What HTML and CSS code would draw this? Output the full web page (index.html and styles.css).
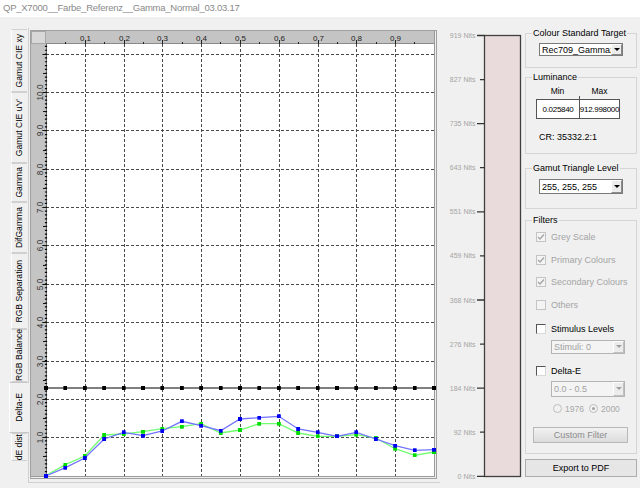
FILE: index.html
```html
<!DOCTYPE html>
<html>
<head>
<meta charset="utf-8">
<link rel="stylesheet" href="styles.css">
</head>
<body>
<div class="titlebar">QP_X7000__Farbe_Referenz__Gamma_Normal_03.03.17</div>
<div class="main">
  <div class="tabctl">
    <div class="tabs">
      <div class="tab t1"><span>Gamut CIE xy</span></div>
      <div class="tab t2"><span>Gamut CIE u'v'</span></div>
      <div class="tab t3"><span>Gamma</span></div>
      <div class="tab t4"><span>DifGamma</span></div>
      <div class="tab t5"><span>RGB Separation</span></div>
      <div class="tab t6"><span>RGB Balance</span></div>
      <div class="tab t7 sel"><span>Delta-E</span></div>
      <div class="tab t8"><span>dE dist</span></div>
    </div>
    <div class="page">
      <svg class="chart" viewBox="30 28 408 452" xmlns="http://www.w3.org/2000/svg">
        <defs>
          <marker id="mk" markerWidth="4" markerHeight="4" refX="2" refY="2" markerUnits="userSpaceOnUse"><rect width="4" height="4" fill="#000"/></marker>
          <marker id="mb" markerWidth="4" markerHeight="4" refX="2" refY="2" markerUnits="userSpaceOnUse"><rect width="4" height="4" fill="#0000f0"/></marker>
          <marker id="mg" markerWidth="4" markerHeight="4" refX="2" refY="2" markerUnits="userSpaceOnUse"><rect width="4" height="4" fill="#00dc00"/></marker>
        </defs>
        <rect x="30.5" y="30.5" width="406" height="448" fill="#f0f0f0" stroke="#a0a0a0"/>
        <rect x="31" y="31" width="404" height="13" fill="#c4c4c4"/>
        <rect x="31" y="31" width="15" height="446" fill="#c4c4c4"/>
        <rect x="31.5" y="31.5" width="14" height="12" fill="#d8d8d8" stroke="#a8a8a8"/>
        <rect x="46" y="44" width="388" height="432" fill="#fff"/>
        <line x1="434.5" y1="31" x2="434.5" y2="477" stroke="#9a9a9a"/>
        <line x1="31" y1="476.5" x2="435" y2="476.5" stroke="#9a9a9a"/>
        <line x1="46" y1="43.5" x2="434" y2="43.5" stroke="#8a8a8a"/>

        <g stroke="#4a4a4a" stroke-width="1" stroke-dasharray="3 2">
          <path d="M85.5 44V476M124.5 44V476M162.5 44V476M201.5 44V476M240.5 44V476M279.5 44V476M318.5 44V476M356.5 44V476M395.5 44V476"/>
          <path d="M46 437.5H434M46 399.5H434M46 361.5H434M46 322.5H434M46 284.5H434M46 245.5H434M46 207.5H434M46 169.5H434M46 130.5H434M46 92.5H434M46 54.5H434"/>
        </g>

        <g stroke="#222" stroke-width="1">
          <path d="M65.5 42V44M85.5 40V44M104.5 42V44M124.5 40V44M143.5 42V44M162.5 40V44M182.5 42V44M201.5 40V44M220.5 42V44M240.5 40V44M259.5 42V44M279.5 40V44M298.5 42V44M318.5 40V44M337.5 42V44M356.5 40V44M376.5 42V44M395.5 40V44M414.5 42V44"/>
        </g>
        <g font-family="Liberation Sans, Arial, sans-serif" font-size="8" fill="#222" text-anchor="middle">
          <text x="85.5" y="41">0.1</text>
          <text x="124.5" y="41">0.2</text>
          <text x="162.5" y="41">0.3</text>
          <text x="201.5" y="41">0.4</text>
          <text x="240.5" y="41">0.5</text>
          <text x="279.5" y="41">0.6</text>
          <text x="318.5" y="41">0.7</text>
          <text x="356.5" y="41">0.8</text>
          <text x="395.5" y="41">0.9</text>
        </g>

        <path d="M46 476V44" stroke="#000" stroke-width="2.2" stroke-dasharray="1.2 2.63"/>
        <path d="M46.5 476V44" stroke="#000" stroke-width="0.6"/>
        <g stroke="#111" stroke-width="1">
          <path d="M42.5 437.5H47M42.5 399.5H47M42.5 361.5H47M42.5 322.5H47M42.5 284.5H47M42.5 245.5H47M42.5 207.5H47M42.5 169.5H47M42.5 130.5H47M42.5 92.5H47M42.5 54.5H47"/>
          <path d="M43 456.5H46M43 418.5H46M43 380.5H46M43 341.5H46M43 303.5H46M43 265.5H46M43 226.5H46M43 188.5H46M43 150.5H46M43 111.5H46M43 73.5H46"/>
        </g>
        <g font-family="Liberation Sans, Arial, sans-serif" font-size="8.3" fill="#333" text-anchor="middle">
          <text transform="translate(42.5 437.5) rotate(-90)">1.0</text>
          <text transform="translate(42.5 399.5) rotate(-90)">2.0</text>
          <text transform="translate(42.5 361.5) rotate(-90)">3.0</text>
          <text transform="translate(42.5 322.5) rotate(-90)">4.0</text>
          <text transform="translate(42.5 284.5) rotate(-90)">5.0</text>
          <text transform="translate(42.5 245.5) rotate(-90)">6.0</text>
          <text transform="translate(42.5 207.5) rotate(-90)">7.0</text>
          <text transform="translate(42.5 169.5) rotate(-90)">8.0</text>
          <text transform="translate(42.5 130.5) rotate(-90)">9.0</text>
          <text transform="translate(42.5 92.5) rotate(-90)">10.0</text>
        </g>

        <polyline fill="none" stroke="#000" stroke-width="1.2" marker-start="url(#mk)" marker-mid="url(#mk)" marker-end="url(#mk)"
          points="46,388 65.4,388 84.8,388 104.2,388 123.6,388 143,388 162.4,388 181.8,388 201.2,388 220.6,388 240,388 259.4,388 278.8,388 298.2,388 317.6,388 337,388 356.4,388 375.8,388 395.2,388 414.6,388 434,388"/>
        <polyline fill="none" stroke="#70ff70" stroke-width="1.3" marker-start="url(#mg)" marker-mid="url(#mg)" marker-end="url(#mg)"
          points="46,475.5 65.4,464.7 84.8,456 104.2,435 123.6,434 143,431.7 162.4,428.7 181.8,426.7 201.2,423.7 220.6,433 240,430 259.4,423.7 278.8,423.7 298.2,433 317.6,436.3 337,436.3 356.4,434.7 375.8,438 395.2,448.7 414.6,455.3 434,452"/>
        <polyline fill="none" stroke="#7272ff" stroke-width="1.3" marker-start="url(#mb)" marker-mid="url(#mb)" marker-end="url(#mb)"
          points="46,476 65.4,467.7 84.8,458 104.2,439 123.6,432.3 143,435.7 162.4,431 181.8,421.3 201.2,425.7 220.6,430.7 240,419 259.4,417.7 278.8,416.3 298.2,429 317.6,432.3 337,436.3 356.4,432.3 375.8,439 395.2,445.7 414.6,450.3 434,449.7"/>
      </svg>
    </div>
  </div>

  <svg class="scale" viewBox="440 28 84 452" xmlns="http://www.w3.org/2000/svg">
    <rect x="484.5" y="35.5" width="36" height="441" fill="#e9dbdb" stroke="#404040" stroke-width="1.3"/>
    <g stroke="#333" stroke-width="1.3">
      <path d="M477 35.5H484.5M480 79.6H484.5M477 123.7H484.5M480 167.7H484.5M477 211.8H484.5M480 255.9H484.5M477 300H484.5M480 344.1H484.5M477 388.1H484.5M480 432.2H484.5M477 476.3H484.5"/>
    </g>
    <g font-family="Liberation Sans, Arial, sans-serif" font-size="7" fill="#a4a4a4" text-anchor="end">
      <text x="475.5" y="38">919 Nits</text>
      <text x="475.5" y="82.1">827 Nits</text>
      <text x="475.5" y="126.2">735 Nits</text>
      <text x="475.5" y="170.2">643 Nits</text>
      <text x="475.5" y="214.3">551 Nits</text>
      <text x="475.5" y="258.4">459 Nits</text>
      <text x="475.5" y="302.5">368 Nits</text>
      <text x="475.5" y="346.6">276 Nits</text>
      <text x="475.5" y="390.6">184 Nits</text>
      <text x="475.5" y="434.7">92 Nits</text>
      <text x="475.5" y="478.8">0 Nits</text>
    </g>
  </svg>

  <div class="panel">
    <div class="group g-target">
      <span class="group-title">Colour Standard Target</span>
      <div class="combo w84">
        <span class="combo-text">Rec709_Gamma2</span>
        <span class="combo-btn"><i class="arrow"></i></span>
      </div>
    </div>

    <div class="group g-lum">
      <span class="group-title">Luminance</span>
      <div class="lum-table">
        <div class="lum-head"><span>Min</span><span>Max</span></div>
        <div class="lum-gap"><span></span><span class="div"></span></div>
        <div class="lum-vals"><span>0.025840</span><span class="div">912.998000</span></div>
      </div>
      <div class="cr">CR: 35332.2:1</div>
    </div>

    <div class="group g-gamut">
      <span class="group-title">Gamut Triangle Level</span>
      <div class="combo w84 tall">
        <span class="combo-text">255, 255, 255</span>
        <span class="combo-btn"><i class="arrow"></i></span>
      </div>
    </div>

    <div class="group g-filters">
      <span class="group-title">Filters</span>
      <div class="chk dis r1"><span class="box"><svg viewBox="0 0 8 8"><polyline points="1,4 3,6 7,1.5" fill="none" stroke="#a6a6a6" stroke-width="1.4"/></svg></span><span>Grey Scale</span></div>
      <div class="chk dis r2"><span class="box"><svg viewBox="0 0 8 8"><polyline points="1,4 3,6 7,1.5" fill="none" stroke="#a6a6a6" stroke-width="1.4"/></svg></span><span>Primary Colours</span></div>
      <div class="chk dis r2"><span class="box"><svg viewBox="0 0 8 8"><polyline points="1,4 3,6 7,1.5" fill="none" stroke="#a6a6a6" stroke-width="1.4"/></svg></span><span>Secondary Colours</span></div>
      <div class="chk dis r2"><span class="box"></span><span>Others</span></div>
      <div class="chk r5"><span class="box on"></span><span>Stimulus Levels</span></div>
      <div class="combo dcombo c1">
        <span class="combo-text">Stimuli: 0</span>
        <span class="combo-btn"><i class="arrow"></i></span>
      </div>
      <div class="chk r6"><span class="box on"></span><span>Delta-E</span></div>
      <div class="combo dcombo c2">
        <span class="combo-text">0.0 - 0.5</span>
        <span class="combo-btn"><i class="arrow"></i></span>
      </div>
      <div class="radios">
        <span class="radio"></span><span class="rlabel">1976</span>
        <span class="radio sel"></span><span class="rlabel">2000</span>
      </div>
      <div class="btn custom">Custom Filter</div>
    </div>

    <div class="btn export">Export to PDF</div>
  </div>
</div>
</body>
</html>
```

FILE: styles.css
```css
* { box-sizing: border-box; }
html, body { margin: 0; padding: 0; }
body {
  width: 640px;
  height: 488px;
  overflow: hidden;
  background: #f0f0f0;
  font-family: "Liberation Sans", Arial, sans-serif;
  font-size: 9px;
  color: #000;
}

.titlebar {
  height: 17px;
  background: #fff;
  color: #8a8a8a;
  font-size: 9.5px;
  letter-spacing: -0.25px;
  line-height: 16px;
  padding-left: 3px;
  white-space: nowrap;
}

.main { display: flex; align-items: flex-start; }

/* tab control */
.tabctl { display: flex; margin-left: 9px; margin-top: 11px; }
.tabs { width: 19px; padding-top: 1px; display: flex; flex-direction: column; }
.tab {
  width: 16px;
  margin-left: 2px;
  border: 1px solid #d0d0d0;
  border-right: none;
  border-left-color: #fdfdfd;
  display: flex;
  align-items: center;
  justify-content: center;
  background: #f0f0f0;
}
.tab span {
  writing-mode: vertical-rl;
  transform: rotate(180deg);
  font-size: 8.6px;
  line-height: 1;
  white-space: nowrap;
  color: #000;
}
.t1 { height: 63px; }
.t2 { height: 71px; }
.t3 { height: 39px; }
.t4 { height: 51px; }
.t5 { height: 76px; }
.t6 { height: 53px; }
.t7 { height: 51px; }
.t8 { height: 28px; }
.tab.sel {
  width: 20px;
  margin-left: 0;
  margin-right: -1px;
  position: relative;
  z-index: 1;
  border-color: #c8c8c8;
  border-left-color: #fff;
}

.page {
  width: 412px;
  height: 455px;
  border-left: 1px solid #d0d0d0;
  border-bottom: 1px solid #d0d0d0;
  padding-left: 1px;
}
.chart { display: block; width: 408px; height: 452px; }

.scale { display: block; width: 84px; height: 452px; margin-top: 11px; }

/* right panel */
.panel {
  width: 112px;
  margin-left: 1px;
  margin-top: 16px;
  display: flex;
  flex-direction: column;
}
.group { position: relative; border: 1px solid #d5d5d5; }
.group-title {
  position: absolute;
  top: -6px;
  left: 6px;
  padding: 0 1px;
  background: #f0f0f0;
  line-height: 11px;
  font-size: 9px;
  white-space: nowrap;
}
.g-target { height: 35px; padding: 9px 0 0 13px; }
.g-lum { height: 77px; margin-top: 9px; padding: 8px 0 0 10px; }
.g-gamut { height: 41px; margin-top: 14px; padding: 10px 0 0 13px; }
.g-filters { height: 234px; margin-top: 11px; padding: 9px 0 0 10px; display: flex; flex-direction: column; align-items: flex-start; }

/* combo boxes */
.combo {
  display: flex;
  height: 13px;
  background: #fff;
  border: 1px solid #7a7a7a;
}
.w84 { width: 84px; }
.combo.tall { height: 15px; }
.combo-text {
  flex: 1;
  min-width: 0;
  overflow: hidden;
  white-space: nowrap;
  padding-left: 2px;
  display: flex;
  align-items: center;
  font-size: 9px;
}
.combo-btn {
  width: 11px;
  flex: none;
  background: #ececec;
  border: 1px solid;
  border-color: #fff #8a8a8a #8a8a8a #fff;
  display: flex;
  align-items: center;
  justify-content: center;
}
.arrow {
  width: 0;
  height: 0;
  border-left: 3px solid transparent;
  border-right: 3px solid transparent;
  border-top: 3px solid #000;
}
.dcombo {
  width: 74px;
  margin-left: 15px;
  background: #f4f4f4;
  border-color: #b4b4b4;
  color: #a0a0a0;
}
.dcombo .arrow { border-top-color: #a0a0a0; }
.dcombo .combo-btn { border-color: #fff #c0c0c0 #c0c0c0 #fff; }
.c1 { height: 14px; margin-top: 4px; }
.c2 { height: 16px; margin-top: 2.5px; }

/* luminance table */
.lum-table { width: 84px; }
.lum-head, .lum-gap, .lum-vals { display: grid; grid-template-columns: 43px 41px; }
.lum-head { height: 10px; line-height: 10px; text-align: center; font-size: 8.5px; }
.lum-gap { height: 3px; }
.lum-gap .div { border-left: 1px solid #555; }
.lum-vals {
  height: 20px;
  border: 1px solid #555;
  background: #fff;
  grid-template-columns: 42px 40px;
}
.lum-vals span {
  display: flex;
  align-items: center;
  justify-content: center;
  font-size: 8px;
  letter-spacing: -0.3px;
  white-space: nowrap;
}
.lum-vals .div { border-left: 1px solid #555; }
.cr { margin-top: 13px; margin-left: 3px; line-height: 11px; font-size: 9px; }

/* checkboxes */
.chk { display: flex; align-items: center; height: 14px; gap: 5px; white-space: nowrap; font-size: 9px; }
.chk .box {
  width: 10px;
  height: 10px;
  border: 1px solid #c4c4c4;
  background: #f4f4f4;
  display: flex;
  align-items: center;
  justify-content: center;
}
.chk .box svg { width: 8px; height: 8px; }
.chk .box.on {
  background: #fff;
  border-color: #555 #d8d8d8 #d8d8d8 #555;
}
.chk.dis { color: #a4a4a4; }
.r2 { margin-top: 8.5px; }
.r5 { margin-top: 10px; }
.r6 { margin-top: 10.5px; }

.radios { display: flex; align-items: center; height: 14px; margin-top: 5px; margin-left: 17px; color: #a8a8a8; font-size: 8.5px; }
.radio {
  width: 9px;
  height: 9px;
  border-radius: 50%;
  border: 1px solid #bdbdbd;
  background: #f2f2f2;
  display: flex;
  align-items: center;
  justify-content: center;
}
.radio.sel::after {
  content: "";
  width: 3px;
  height: 3px;
  border-radius: 50%;
  background: #a0a0a0;
}
.rlabel { margin-left: 3px; margin-right: 5px; }

.btn {
  display: flex;
  align-items: center;
  justify-content: center;
  border: 1px solid #adadad;
  background: linear-gradient(#f2f2f2, #dcdcdc);
  font-size: 9px;
  white-space: nowrap;
}
.custom {
  width: 95px;
  height: 16px;
  margin-top: 11.5px;
  margin-left: -3px;
  color: #8c8c8c;
  border-color: #b8b8b8;
}
.export { height: 18px; margin-top: 5px; background: #e6e6e6; }
```
